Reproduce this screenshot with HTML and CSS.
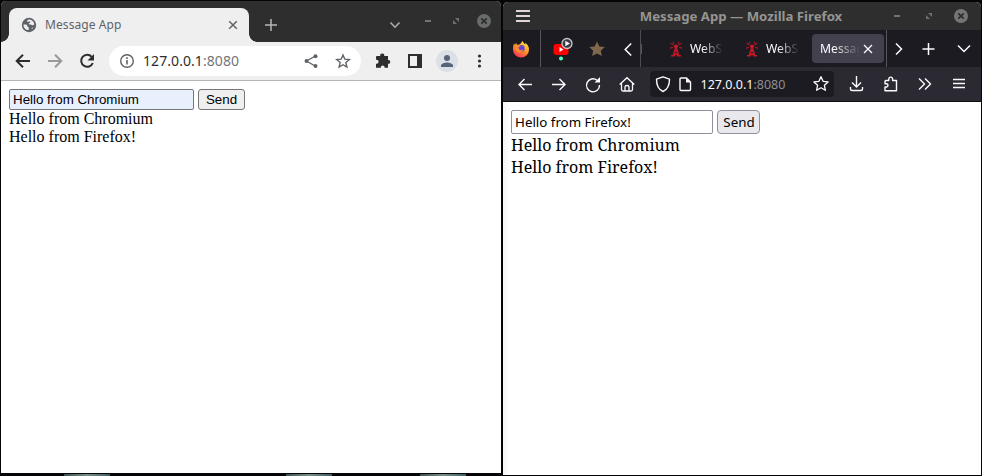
FILE: index.html
```html
<!DOCTYPE html>
<html lang="en">
<head>
<meta charset="utf-8">
<title>Message App</title>
<link rel="stylesheet" href="styles.css">
</head>
<body>
<main class="desktop">
  <section class="chromium">
    <header class="c-strip">
      <div class="c-tab">
        <svg class="c-favicon" width="16" height="16" viewBox="0 0 16 16"><circle cx="8" cy="8" r="7.2" fill="#5f6368"/><path d="M2.500 7.500h2.200c1 0 1.600.7 1.600 1.600 0 .8.600 1.100 1.400 1.100v2.900c-2.900 0-5.400-2.400-5.200-5.600zM6 4.400c.2-1.300 1.200-1.800 2.500-1.800 2.300.2 4.400 2 4.800 4.700-.8 1.100-1.900 1-2.600.6-.6-.4-1.300-.4-2.100-.4-1 0-1.100-1.500-.1-1.600 1.100-.1 1.200-1 .5-1.300-.8-.3-1.400.5-3-.2zM10.400 12.200c.2-1 .8-1.600 1.900-1.600-.4.7-1 1.300-1.900 1.600z" fill="#efefef"/></svg>
        <span class="c-tab-title">Message App</span>
        <svg width="16" height="16" viewBox="0 0 16 16"><path d="M4.200 4.200l7.600 7.600M11.800 4.200l-7.600 7.600" stroke="#5f6368" stroke-width="1.500"/></svg>
      </div>
      <svg class="c-plus" width="16" height="16" viewBox="0 0 16 16"><path d="M8 2v12M2 8h12" stroke="#b8b8b8" stroke-width="1.500"/></svg>
      <svg class="c-chevron" width="16" height="16" viewBox="0 0 16 16"><path d="M3.500 5.500L8 10.200l4.500-4.700" fill="none" stroke="#b0b0b0" stroke-width="1.500"/></svg>
      <div class="controls">
        <svg width="28" height="16" viewBox="0 0 28 16"><path d="M11 8h6" stroke="#747474" stroke-width="2"/></svg>
        <svg width="28" height="16" viewBox="0 0 28 16"><path d="M13 5h4v4zM11 7l4 4h-4z" fill="#707070"/></svg>
        <svg width="28" height="16" viewBox="0 0 28 16"><circle cx="14" cy="8" r="7" fill="#686a6c"/><path d="M11.300 5.300l5.400 5.400M16.700 5.300l-5.400 5.400" stroke="#2e2e2e" stroke-width="1.800"/></svg>
      </div>
    </header>
    <nav class="c-toolbar">
      <svg width="32" height="20" viewBox="0 0 32 20"><path d="M23 10H10.500M16 3.700L9.700 10l6.300 6.300" fill="none" stroke="#2e2e2e" stroke-width="2"/></svg>
      <svg width="32" height="20" viewBox="0 0 32 20"><path d="M9 10h12.500M16 3.700l6.300 6.300-6.300 6.300" fill="none" stroke="#999" stroke-width="2"/></svg>
      <svg width="32" height="20" viewBox="0 0 32 20"><path d="M20.700 5.800A6 6 0 1 0 21.800 12" fill="none" stroke="#2e2e2e" stroke-width="2"/><path d="M23 3v6.500h-6.500z" fill="#2e2e2e"/></svg>
      <div class="omnibox">
        <svg width="16" height="16" viewBox="0 0 16 16"><circle cx="8" cy="8" r="6.300" fill="none" stroke="#5f6368" stroke-width="1.400"/><path d="M8 7v4.500M8 4.300v1.700" stroke="#5f6368" stroke-width="1.600"/></svg>
        <span class="c-url">127.0.0.1<span class="c-port">:8080</span></span>
        <svg width="32" height="16" viewBox="0 0 32 16"><path d="M20.500 3l-9 5 9 5.200" fill="none" stroke="#5f6368" stroke-width="1.300"/><g fill="#5f6368"><circle cx="20.500" cy="3.200" r="2"/><circle cx="11.500" cy="8" r="2"/><circle cx="20.500" cy="13" r="2"/></g></svg>
        <svg width="32" height="16" viewBox="0 0 32 16"><path d="M16 2l1.800 4.200 4.500.4-3.400 3 1 4.400-3.900-2.300L12.100 14l1-4.400-3.400-3 4.500-.4z" fill="none" stroke="#5f6368" stroke-width="1.400"/></svg>
      </div>
      <svg class="c-ext" width="32" height="20" viewBox="0 0 32 20"><path d="M10 5h3.300a2 2 0 1 1 3.900 0H21v4h.4a1.900 1.900 0 0 1 0 3.800H21v4h-3.400v-.4a1.900 1.900 0 0 0-3.800 0v.4H9v-4h.6a2 2 0 0 0 0-4H9V6a1 1 0 0 1 1-1z" fill="#2e2e2e"/></svg>
      <svg width="32" height="20" viewBox="0 0 32 20"><path d="M9 3h14v14H9zM11 5v10h7V5z" fill="#2e2e2e" fill-rule="evenodd"/></svg>
      <svg width="32" height="22" viewBox="0 0 32 22"><circle cx="16" cy="11" r="11" fill="#dce0e6"/><circle cx="16" cy="8" r="3" fill="#56637a"/><path d="M10 17v-1.500c0-2 4-3 6-3s6 1 6 3V17z" fill="#56637a"/></svg>
      <svg width="32" height="20" viewBox="0 0 32 20"><g fill="#2e2e2e"><circle cx="16.500" cy="5" r="1.600"/><circle cx="16.500" cy="10" r="1.600"/><circle cx="16.500" cy="15" r="1.600"/></g></svg>
    </nav>
    <article class="c-page">
      <div class="form"><input class="c-input" value="Hello from Chromium"><button class="c-send">Send</button></div>
      <div>Hello from Chromium</div>
      <div>Hello from Firefox!</div>
    </article>
  </section>
  <section class="firefox">
    <header class="f-title">
      <svg width="40" height="16" viewBox="0 0 40 16"><path d="M13 3h14M13 8h14M13 13h14" stroke="#e0d5d8" stroke-width="2"/></svg>
      <h1>Message App — Mozilla Firefox</h1>
      <div class="f-controls">
        <svg width="32" height="16" viewBox="0 0 32 16"><path d="M13 8h6" stroke="#747474" stroke-width="2"/></svg>
        <svg width="32" height="16" viewBox="0 0 32 16"><path d="M15 5h4v4zM13 7l4 4h-4z" fill="#707070"/></svg>
        <svg width="32" height="16" viewBox="0 0 32 16"><circle cx="16" cy="8" r="7" fill="#737577"/><path d="M13.300 5.300l5.400 5.400M18.700 5.300l-5.400 5.400" stroke="#2e2e2e" stroke-width="1.800"/></svg>
      </div>
    </header>
    <div class="f-strip">
      <div class="f-home">
        <svg width="18" height="18" viewBox="0 0 18 18"><defs><linearGradient id="fire" x1=".8" y1="0" x2=".2" y2="1"><stop offset="0" stop-color="#fff044"/><stop offset=".45" stop-color="#ff9a25"/><stop offset="1" stop-color="#f5245c"/></linearGradient></defs><path d="M2 3.500l1 1.400 1-1.900 1.500 2L8 4.200C9 3.500 9.400 2 10.700 1c.4 1.600 1.600 2.400 2.600 3.300l.1-1.500c2.200 1.800 3.600 4 3.600 6.700a8 8 0 0 1-16 0c0-2.200.2-4.200 1-6z" fill="url(#fire)"/><circle cx="9.300" cy="8.500" r="3.400" fill="#6b45d2"/><path d="M3.500 5.500c2-1 3.600-.4 5.200.6-1.300.3-1.500 1.200-2.200 1.300 0 2.500 2 3.500 5 2.400-1 2.700-4.500 3.500-6.500 1.900C3.300 10.500 3 8 3.500 5.500z" fill="#ff8a2a"/></svg>
      </div>
      <div class="f-pins">
        <svg width="36" height="36" viewBox="0 0 36 36"><rect x="10.500" y="13" width="15" height="11" rx="3" fill="#f00"/><path d="M16.500 16v5l4-2.500z" fill="#fff"/><circle cx="24" cy="12.500" r="5" fill="#3a3944" stroke="#c5c5cb" stroke-width="1.300"/><path d="M22.300 9.800v5.400l4.600-2.700z" fill="#fff"/><circle cx="18" cy="27.500" r="2" fill="#54ffbd"/></svg>
        <svg width="36" height="36" viewBox="0 0 36 36"><path d="M18 10.500l2.400 5 5.400.6-4 3.700 1.100 5.300-4.900-2.600-4.900 2.600 1.100-5.300-4-3.700 5.400-.6z" fill="#80664b"/></svg>
        <svg width="26" height="36" viewBox="0 0 26 36"><path d="M16.200 12.500l-6 6 6 6" fill="none" stroke="#fbfbfe" stroke-width="1.500"/></svg>
      </div>
      <div class="f-tabs">
        <i class="sliver"></i>
        <svg class="tower" width="16" height="16" viewBox="0 0 16 16"><path d="M7.200 5.500h1.600L11.300 14H13v1.500H9.500L8 13.500l-1.500 2H3V14h1.700z" fill="#c01724"/><path d="M7 11.500h2" stroke="#1c1b22"/><circle cx="8" cy="5.300" r="1.900" fill="#d01a26"/><path d="M5.600 4L2.500 2.300M4.800 6.400L2 7.200M6 2.500L5 .8M10.400 4l3.100-1.700M11.200 6.400l2.800.8M10 2.500l1-1.700" stroke="#a91b26" stroke-width="1.200"/></svg>
        <span class="clip">WebSo</span>
        <svg class="tower second" width="16" height="16" viewBox="0 0 16 16"><path d="M7.200 5.500h1.600L11.300 14H13v1.500H9.500L8 13.500l-1.500 2H3V14h1.700z" fill="#c01724"/><path d="M7 11.500h2" stroke="#1c1b22"/><circle cx="8" cy="5.300" r="1.900" fill="#d01a26"/><path d="M5.600 4L2.500 2.300M4.800 6.400L2 7.200M6 2.500L5 .8M10.400 4l3.100-1.700M11.200 6.400l2.800.8M10 2.500l1-1.700" stroke="#a91b26" stroke-width="1.200"/></svg>
        <span class="clip">WebSo</span>
        <div class="f-active"><span class="clip active-title">Messag</span><svg width="16" height="16" viewBox="0 0 16 16"><path d="M4 4l8 8M12 4l-8 8" stroke="#fbfbfe" stroke-width="1.300"/></svg></div>
      </div>
      <svg class="f-next" width="24" height="20" viewBox="0 0 24 20"><path d="M9 4.500l5.500 5.500L9 15.500" fill="none" stroke="#fbfbfe" stroke-width="1.500"/></svg>
      <svg class="f-new" width="36" height="20" viewBox="0 0 36 20"><path d="M18.500 4v12M12.500 10h12" stroke="#fbfbfe" stroke-width="1.500"/></svg>
      <svg class="f-all" width="34" height="20" viewBox="0 0 34 20"><path d="M11 6.500l6 6 6-6" fill="none" stroke="#fbfbfe" stroke-width="1.500"/></svg>
    </div>
    <nav class="f-toolbar">
      <svg width="34" height="20" viewBox="0 0 34 20"><path d="M24 10.500H10.500M16.500 5L11 10.500l5.500 5.500" fill="none" stroke="#fbfbfe" stroke-width="1.400"/></svg>
      <svg width="34" height="20" viewBox="0 0 34 20"><path d="M10 10.500h13.500M17.500 5l5.500 5.500-5.500 5.500" fill="none" stroke="#fbfbfe" stroke-width="1.400"/></svg>
      <svg width="34" height="20" viewBox="0 0 34 20"><path d="M21 6.200A6.500 6.500 0 1 0 23.500 11" fill="none" stroke="#fbfbfe" stroke-width="1.400"/><path d="M24 3v5.500h-5.500z" fill="#fbfbfe"/></svg>
      <svg width="34" height="20" viewBox="0 0 34 20"><path d="M9.700 10.500L17 3.700l7.300 6.800M11.500 9.500v6q0 1.500 1.500 1.500h8q1.500 0 1.500-1.500v-6M15 17v-4q0-1.500 2-1.500t2 1.500v4" fill="none" stroke="#fbfbfe" stroke-width="1.300"/></svg>
      <div class="f-urlbar">
        <svg width="22" height="20" viewBox="0 0 22 20"><path d="M11 2.800l6.500 2.400c0 6-1.800 10.200-6.500 12.300C6.300 15.400 4.500 11.200 4.500 5.200z" fill="none" stroke="#fbfbfe" stroke-width="1.400" stroke-linejoin="round"/></svg>
        <svg width="22" height="20" viewBox="0 0 22 20"><path d="M7 4h5.500L16.500 8v7.500q0 1-1 1H7q-1 0-1-1V5q0-1 1-1z" fill="none" stroke="#fbfbfe" stroke-width="1.400"/><path d="M12 4v4.500h4.500z" fill="#fbfbfe"/></svg>
        <span class="f-url">127.0.0.1<span class="f-port">:8080</span></span>
        <svg width="26" height="20" viewBox="0 0 26 20"><path d="M13 2.700l2.100 4.600 5 .6-3.700 3.400 1 5-4.400-2.500-4.400 2.500 1-5L5.900 7.900l5-.6z" fill="none" stroke="#fbfbfe" stroke-width="1.300" stroke-linejoin="round"/></svg>
      </div>
      <svg class="f-download" width="34" height="20" viewBox="0 0 34 20"><path d="M16.500 2v10.500M12 8.500l4.500 4.500L21 8.500M10.500 13v2q0 1.500 1.500 1.500h9q1.500 0 1.500-1.500v-2" fill="none" stroke="#fbfbfe" stroke-width="1.400"/></svg>
      <svg width="34" height="20" viewBox="0 0 34 20"><path d="M12 6.500h2.800V5a1.900 1.900 0 0 1 3.800 0v1.500H22.500v10.300H11v-3.800h1.700a1.700 1.700 0 0 0 0-3.300H11V7.500q0-1 1-1z" fill="none" stroke="#fbfbfe" stroke-width="1.400" stroke-linejoin="round"/></svg>
      <svg width="34" height="20" viewBox="0 0 34 20"><path d="M11 4.500l5.500 5.500-5.500 5.500M17 4.500l5.500 5.500-5.500 5.500" fill="none" stroke="#fbfbfe" stroke-width="1.400"/></svg>
      <svg width="34" height="20" viewBox="0 0 34 20"><path d="M11 5.500h12M11 9.500h12M11 13.500h12" stroke="#fbfbfe" stroke-width="1.300"/></svg>
    </nav>
    <article class="f-page">
      <div class="form"><input class="f-input" value="Hello from Firefox!"><button class="f-send">Send</button></div>
      <div>Hello from Chromium</div>
      <div>Hello from Firefox!</div>
    </article>
  </section>
</main>
<div class="panel"><i></i><i></i><i></i></div>
</body>
</html>
```

FILE: styles.css
```css
* { box-sizing: border-box; }
body { margin: 0; background: #050507; width: 982px; height: 476px; overflow: hidden; position: relative; }
svg { display: block; flex: none; }
.desktop { display: flex; align-items: flex-start; gap: 2px; padding-left: 1px; }
.form { display: flex; gap: 4px; }
.controls, .f-controls { display: flex; }

.chromium { width: 500px; height: 472px; margin-top: 1px; display: flex; flex-direction: column; border-radius: 5px 5px 0 0; overflow: hidden; background: #efefef; }
.c-strip { height: 41px; display: flex; align-items: center; padding: 7px 4px 0 8px; background: #2e2e2e; }
.c-tab { position: relative; width: 240px; height: 34px; display: flex; align-items: center; padding: 0 8px 0 12px; background: #efefef; border-radius: 8px 8px 0 0; }
.c-tab::before, .c-tab::after { content: ""; position: absolute; bottom: 0; width: 8px; height: 8px; }
.c-tab::before { left: -8px; background: radial-gradient(circle at 0 0, #2e2e2e 7.5px, #efefef 8px); }
.c-tab::after { right: -8px; background: radial-gradient(circle at 100% 0, #2e2e2e 7.5px, #efefef 8px); }
.c-tab-title { flex: 1; margin-left: 8px; font: 12px/18px "Noto Sans", sans-serif; letter-spacing: 0.08px; color: #5f6368; }
.c-plus { margin-left: 14px; }
.c-chevron { margin-left: auto; margin-right: 11px; }
.controls { margin-top: -8px; margin-right: -0.5px; }
.c-toolbar { height: 39px; display: flex; align-items: center; padding: 0 6px; border-bottom: 1px solid #b6b6b6; background: #efefef; }
.omnibox { width: 252px; height: 30px; margin-left: 6px; padding: 0 2px 0 10px; display: flex; align-items: center; background: #fff; border-radius: 15px; }
.c-url { flex: 1; margin-left: 8px; font: 14px/20px "Noto Sans", sans-serif; letter-spacing: 0.07px; color: #2e2e2e; }
.c-port { color: #757575; }
.c-ext { margin-left: 6px; }
.c-page { flex: 1; padding: 8px; background: #fff; font: 16px/18px "Liberation Serif", serif; color: #000; }
.c-input, .c-send { height: 21px; margin: 0; font: 13.333px "Liberation Sans", sans-serif; color: #000; border: 1px solid #767676; border-radius: 2px; }
.c-input { width: 185px; padding: 1px 3px; background: #e8f0fe; }
.c-send { width: 47px; padding: 0; background: #efefef; border-radius: 3px; }

.firefox { width: 478px; height: 473px; margin-top: 2px; display: flex; flex-direction: column; border-radius: 5px 5px 0 0; overflow: hidden; background: #fff; }
.f-title { height: 28px; display: flex; align-items: center; justify-content: space-between; padding-right: 4px; background: #2e2e2e; }
.f-title h1 { margin: 0 0 0 58px; font: bold 13.2px/18px "Noto Sans", sans-serif; color: #969492; white-space: nowrap; }
.f-strip { height: 37px; display: flex; align-items: center; background: #1c1b22; font: 12.2px/18px "Noto Sans", sans-serif; color: #fbfbfe; }
.f-home { width: 38px; height: 37px; display: flex; align-items: center; padding-left: 9px; border-right: 1px solid #56555c; }
.f-pins { width: 100px; height: 37px; display: flex; align-items: center; padding-left: 2px; border-right: 1px solid #4c4b52; }
.f-tabs { width: 246px; height: 37px; display: flex; align-items: center; border-right: 1px solid #56555c; }
.sliver { width: 1px; height: 10px; background: #56555c; }
.tower { margin: 0 6px 0 26px; }
.tower.second { margin-left: 21px; }
.clip { width: 33px; overflow: hidden; white-space: nowrap; -webkit-mask-image: linear-gradient(90deg, #000 35%, transparent 100%); mask-image: linear-gradient(90deg, #000 35%, transparent 100%); }
.f-active { width: 72px; height: 29px; margin-left: 13px; padding-left: 8px; display: flex; align-items: center; background: #42414d; border-radius: 4px; }
.active-title { width: 40px; }
.f-new { margin-left: -1px; }
.f-all { margin-left: 1px; }
.f-toolbar { height: 35px; display: flex; align-items: center; padding: 0 5px; background: #2b2a33; border-bottom: 1px solid #0c0c0d; }
.f-urlbar { width: 184px; height: 26px; margin-left: 6px; padding-left: 2px; display: flex; align-items: center; background: #1c1b22; border-radius: 4px; }
.f-url { flex: 1; margin-left: 4.500px; padding-top: 1px; font: 12.500px/18px "Noto Sans", sans-serif; color: #fbfbfe; }
.f-port { color: #8f8f96; }
.f-download { margin-left: 6px; }
.f-page { flex: 1; padding: 8px; font: 16px/22px "Noto Serif", "DejaVu Serif", serif; color: #000; background: linear-gradient(90deg, #f5f5f5, #fff 7px); }
.f-input, .f-send { height: 24px; margin: 0; font: 13.333px "Noto Sans", sans-serif; color: #000; border: 1px solid #8f8f9d; }
.f-input { width: 202px; padding: 1px 3px; background: #fff; border-radius: 2px; }
.f-send { width: 43px; padding: 0 0 0 1px; background: #e9e9ed; border-radius: 4px; }

.panel { position: absolute; left: 64px; top: 474px; display: flex; }
.panel i { width: 46px; height: 2px; background: linear-gradient(90deg, #3b5051, #788f87, #3f5d62); }
.panel i:nth-child(2) { margin-left: 176px; }
.panel i:nth-child(3) { margin-left: 88px; }
```
